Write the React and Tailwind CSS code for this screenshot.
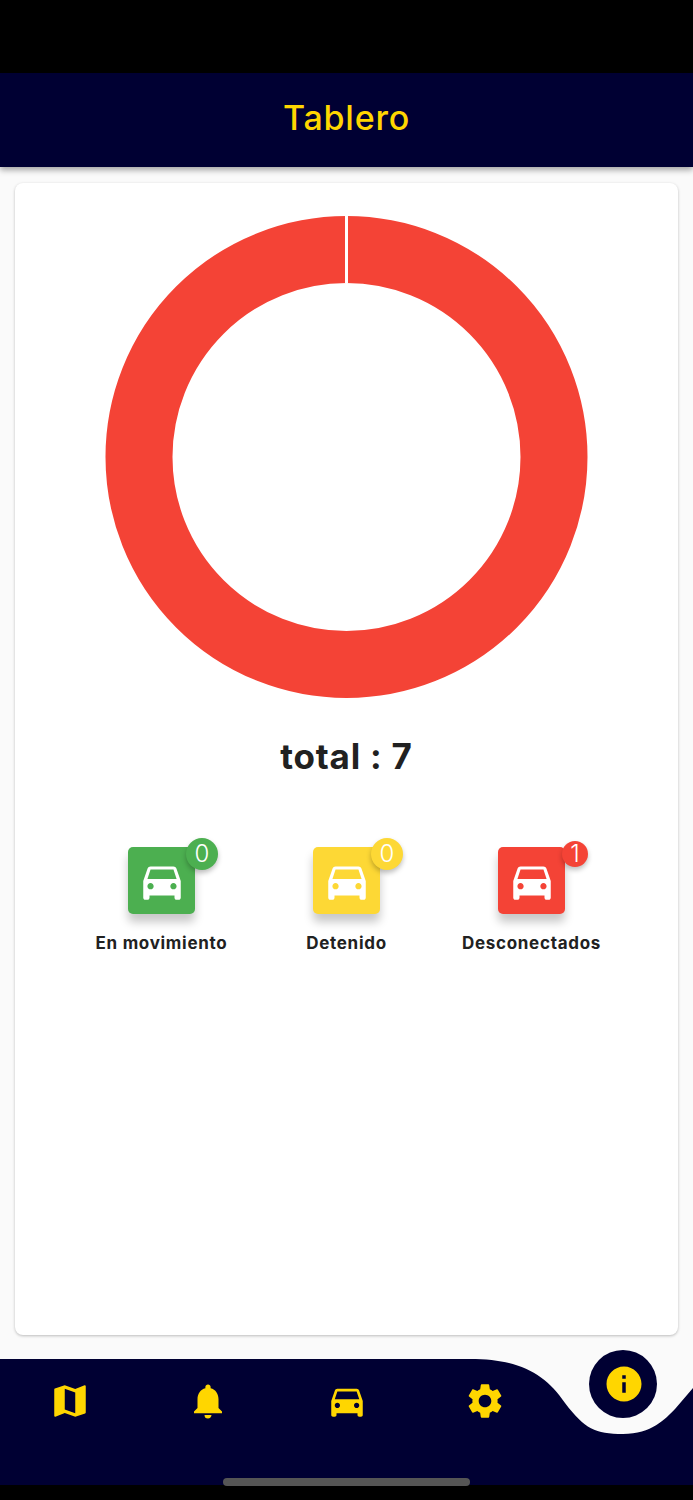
import { MdMap, MdNotifications, MdDirectionsCar, MdSettings, MdInfo } from "react-icons/md";

const STATUS = [
  { label: "En movimiento", count: 0, box: "bg-[#4caf50]", badge: "bg-[#4caf50] w-8 h-8 -top-[9px] -right-[23px]" },
  { label: "Detenido", count: 0, box: "bg-[#fdd835]", badge: "bg-[#fdd835] w-8 h-8 -top-[9px] -right-[23px]" },
  { label: "Desconectados", count: 1, box: "bg-[#f44336]", badge: "bg-[#f44336] w-[26px] h-[26px] -top-[6px] -right-[23px]" },
];

const NAV = [
  { Icon: MdMap, cls: "ml-[2px]" },
  { Icon: MdNotifications, cls: "" },
  { Icon: MdDirectionsCar, cls: "ml-[2px]" },
  { Icon: MdSettings, cls: "" },
];

function StatusItem({ item }) {
  return (
    <div className="flex flex-col items-center">
      <div className={`relative w-[67px] h-[67px] rounded-[5px] flex items-center justify-center shadow-[0_8px_10px_rgba(0,0,0,0.22)] ${item.box}`}>
        <MdDirectionsCar size={50} color="#fff" />
        <div className={`absolute rounded-full flex items-center justify-center text-white text-[24px] font-light leading-none shadow-[0_3px_5px_rgba(0,0,0,0.25)] ${item.badge}`}>
          {item.count}
        </div>
      </div>
      <div className="mt-[17px] text-[17px] leading-[24px] font-bold tracking-[0.7px] text-[#212121] whitespace-nowrap">
        {item.label}
      </div>
    </div>
  );
}

export default function App() {
  return (
    <div className="relative w-[693px] h-[1500px] bg-[#fafafa] flex flex-col overflow-hidden font-['Inter',sans-serif]">
      <div className="h-[73px] bg-black shrink-0" />
      <header className="relative z-10 h-[94px] shrink-0 bg-[#000033] flex items-center justify-center shadow-[0_3px_6px_rgba(0,0,0,0.35)]">
        <h1 className="text-[34px] -mt-[5px] font-medium tracking-[0.8px] text-[#ffd600]">Tablero</h1>
      </header>

      <main className="flex-1 px-[15px] pt-[16px]">
        <section className="h-[1152px] bg-white rounded-[8px] shadow-[0_1px_3px_rgba(0,0,0,0.25)] flex flex-col items-center pt-[33px]">
          <svg className="overflow-visible" width="482" height="482" viewBox="0 0 482 482">
            <circle cx="240.5" cy="241" r="207.5" fill="none" stroke="#f44336" strokeWidth="67" />
            <rect x="239" y="0" width="3" height="67" fill="#fff" />
          </svg>
          <div className="mt-[35px] text-[35px] leading-[46px] font-bold tracking-[0.8px] text-[#212121]">total : 7</div>
          <div className="w-full mt-[68px] grid grid-cols-3 px-[54px]">
            {STATUS.map((s) => (
              <StatusItem key={s.label} item={s} />
            ))}
          </div>
        </section>
      </main>

      <nav className="relative h-[141px] shrink-0 mt-auto">
        <svg className="absolute inset-0" width="693" height="141" viewBox="0 0 693 141">
          <path
            d="M0 0H470C520 0 545 15 565 44C585 70 595 75 623 75C652 75 665 60 675 50L693 29V126H0Z"
            fill="#000033"
          />
          <rect x="0" y="126" width="693" height="15" fill="#000" />
          <rect x="223" y="119" width="247" height="8" rx="4" fill="#555" />
        </svg>
        <div className="relative grid grid-cols-5 pt-[21px]">
          {NAV.map(({ Icon, cls }, i) => (
            <div key={i} className="flex justify-center">
              <Icon className={cls} size={42} color="#ffd600" />
            </div>
          ))}
          <div className="flex justify-center">
            <div className="-mt-[30px] mr-[2px] w-[68px] h-[68px] rounded-full bg-[#000033] flex items-center justify-center">
              <MdInfo className="ml-[2px]" size={42} color="#ffd600" />
            </div>
          </div>
        </div>
      </nav>
    </div>
  );
}
